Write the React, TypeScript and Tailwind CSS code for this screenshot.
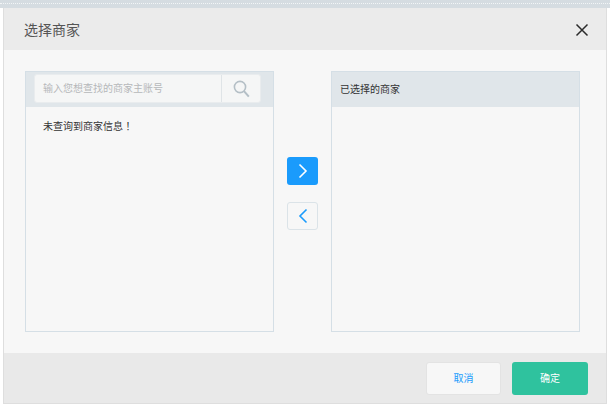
import React from "react";

export default function App() {
  return (
    <div className="w-[610px] h-[404px] bg-white overflow-hidden font-['Liberation_Sans','Noto_Sans_CJK_SC',sans-serif]">
      <div className="h-[8px] bg-[#d5dce1] pt-[3px]">
        <div className="border-t border-dotted border-[#f2f5f6]" />
      </div>
      <div className="mx-[3px] h-[396px] flex flex-col border-x border-b border-[#dedede] bg-[#f7f7f7]">
        <div className="h-[42px] shrink-0 bg-[#ebebeb] flex items-center justify-between pt-[2px] pl-[20px] pr-[17px]">
          <span className="text-[14px] leading-none text-[#555555]">选择商家</span>
          <svg width="14" height="14" viewBox="0 0 14 14" fill="none" stroke="#2b2b2b" strokeWidth="1.5">
            <path d="M1.5 1.5 L12.5 12.5 M12.5 1.5 L1.5 12.5" />
          </svg>
        </div>
        <div className="flex-1 flex items-start pt-[21px] pl-[21px]">
          <div className="w-[249px] h-[261px] shrink-0 border border-[#d5dfe6] flex flex-col">
            <div className="h-[35px] shrink-0 bg-[#e0e6ea] px-[8px] pt-[2px]">
              <div className="h-[29px] w-[227px] flex rounded-[3px] bg-[#f5f6f6] border border-[#e9ecee]">
                <div className="w-[187px] border-r border-[#dfe4e7] flex items-center pl-[8px] text-[10px] text-[#b5b8ba]">输入您想查找的商家主账号</div>
                <div className="flex-1 flex items-center justify-center">
                  <svg width="17" height="18" viewBox="0 0 17 18" fill="none" stroke="#b4bfc6" strokeWidth="1.6">
                    <circle cx="7" cy="7" r="5.6" />
                    <path d="M11 11.2 L15.8 16.6" strokeWidth="2" />
                  </svg>
                </div>
              </div>
            </div>
            <div className="pt-[12px] pl-[17px] text-[10px] leading-[14px] text-[#333333]">
              未查询到商家信息<span className="font-['Noto_Sans_CJK_TC',sans-serif]">！</span>
            </div>
          </div>
          <div className="w-[57px] shrink-0 flex flex-col items-center pt-[86px] gap-[17px]">
            <button className="w-[31px] h-[28px] rounded-[3px] bg-[#1a9bfc] flex items-center justify-center">
              <svg width="10" height="16" viewBox="0 0 10 16" fill="none" stroke="#ffffff" strokeWidth="1.6">
                <path d="M1.5 1.5 L8 8 L1.5 14.5" />
              </svg>
            </button>
            <button className="w-[31px] h-[28px] rounded-[3px] border border-[#dbe3e8] bg-[#f7f7f7] flex items-center justify-center">
              <svg width="10" height="16" viewBox="0 0 10 16" fill="none" stroke="#1a9bfc" strokeWidth="1.6">
                <path d="M8.5 1.5 L2 8 L8.5 14.5" />
              </svg>
            </button>
          </div>
          <div className="w-[249px] h-[261px] shrink-0 border border-[#d5dfe6] flex flex-col">
            <div className="h-[35px] shrink-0 bg-[#e0e6ea] flex items-center pl-[8px] text-[10px] text-[#333333]">已选择的商家</div>
          </div>
        </div>
        <div className="h-[50px] shrink-0 bg-[#e9e9e9] flex items-start justify-end gap-[11px] pt-[9px] pr-[18px]">
          <button className="w-[75px] h-[33px] rounded-[3px] bg-[#f7f7f7] border border-[#e3e3e3] text-[10px] text-[#1a9bfc]">取消</button>
          <button className="w-[76px] h-[33px] rounded-[3px] bg-[#2fc29e] text-[10px] text-[#ffffff]">确定</button>
        </div>
      </div>
    </div>
  );
}
